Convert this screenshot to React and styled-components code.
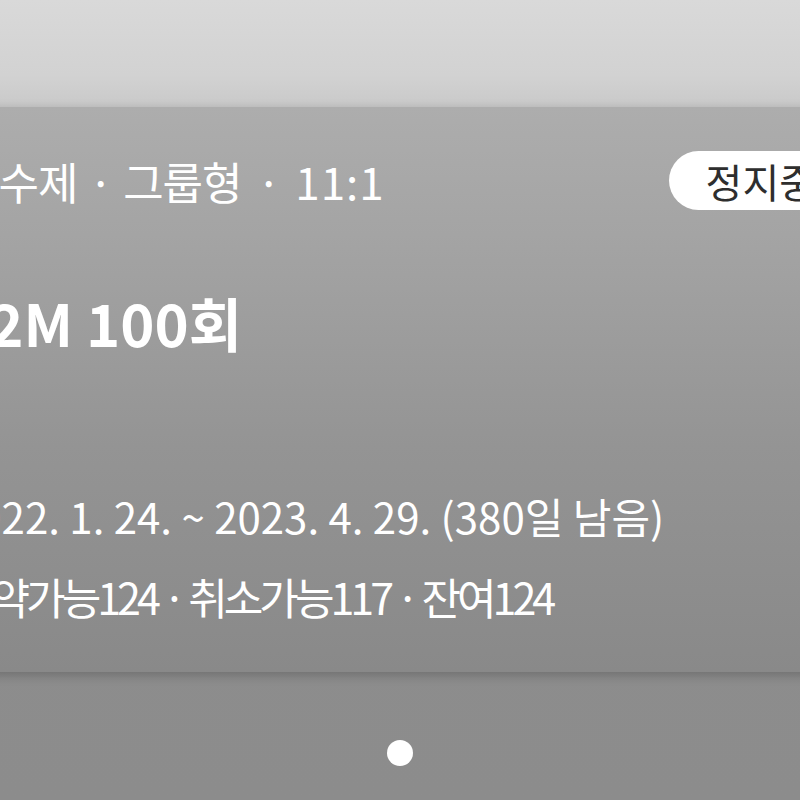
import React from 'react'
import styled, { createGlobalStyle } from 'styled-components'

const GlobalStyle = createGlobalStyle`
  html, body {
    margin: 0;
    padding: 0;
  }
  body {
    font-family: "Noto Sans CJK KR", "Noto Sans", sans-serif;
  }
`

const Page = styled.div`
  width: 800px;
  height: 800px;
  overflow: hidden;
  display: flex;
  flex-direction: column;
  background: linear-gradient(180deg, #8f8f8f 0%, #8c8c8c 100%);
`

const TopArea = styled.div`
  height: 107px;
  flex-shrink: 0;
  background: linear-gradient(180deg, #d9d9d9 0%, #d2d2d2 70%, #c9c9c9 100%);
`

const Card = styled.section`
  margin: 0 -103px 0 -160px;
  padding: 44px 50px 51px 115px;
  display: flex;
  flex-direction: column;
  background: linear-gradient(180deg, #adadad 0%, #a3a3a3 25%, #949494 60%, #898989 100%);
  box-shadow: 0 3px 10px rgba(0, 0, 0, 0.22);
  color: #fff;
`

const HeaderRow = styled.div`
  display: flex;
  align-items: center;
  justify-content: space-between;
  height: 59px;
`

const Meta = styled.div`
  margin-left: 4px;
  font-size: 44px;
  letter-spacing: -1px;
  line-height: 1;
  white-space: nowrap;
`

const Sep = styled.span`
  margin: 0 ${p => p.gap}px;
`

const Ratio = styled.span`
  letter-spacing: 1px;
`

const StatusPill = styled.div`
  height: 59px;
  padding: 0 37px;
  border-radius: 30px;
  background: #fff;
  color: #2e2e2e;
  font-size: 40px;
  letter-spacing: 0;
  display: flex;
  align-items: center;
  white-space: nowrap;
`

const Title = styled.h2`
  margin: 76px 0 0;
  font-size: 58px;
  font-weight: 700;
  line-height: 72px;
  white-space: nowrap;
`

const Period = styled.div`
  margin-top: 133px;
  font-size: 42px;
  line-height: 50px;
  letter-spacing: 0;
  white-space: nowrap;
`

const Counts = styled.div`
  margin-top: 30px;
  font-size: 43px;
  line-height: 50px;
  letter-spacing: -4px;
  white-space: nowrap;
`

const Pager = styled.div`
  display: flex;
  justify-content: center;
  padding-top: 68px;
`

const Dot = styled.span`
  width: 26px;
  height: 26px;
  border-radius: 50%;
  background: #fff;
`

export default function App() {
  return (
    <>
      <GlobalStyle />
      <Page>
        <TopArea />
        <Card>
          <HeaderRow>
            <Meta>
              횟수제<Sep gap={11}>·</Sep>그룹형<Sep gap={15}>·</Sep><Ratio>11:1</Ratio>
            </Meta>
            <StatusPill>정지중</StatusPill>
          </HeaderRow>
          <Title>12M 100회</Title>
          <Period>2022. 1. 24. ~ 2023. 4. 29. (380일 남음)</Period>
          <Counts>예약가능124 · 취소가능117 · 잔여124</Counts>
        </Card>
        <Pager>
          <Dot />
        </Pager>
      </Page>
    </>
  )
}
